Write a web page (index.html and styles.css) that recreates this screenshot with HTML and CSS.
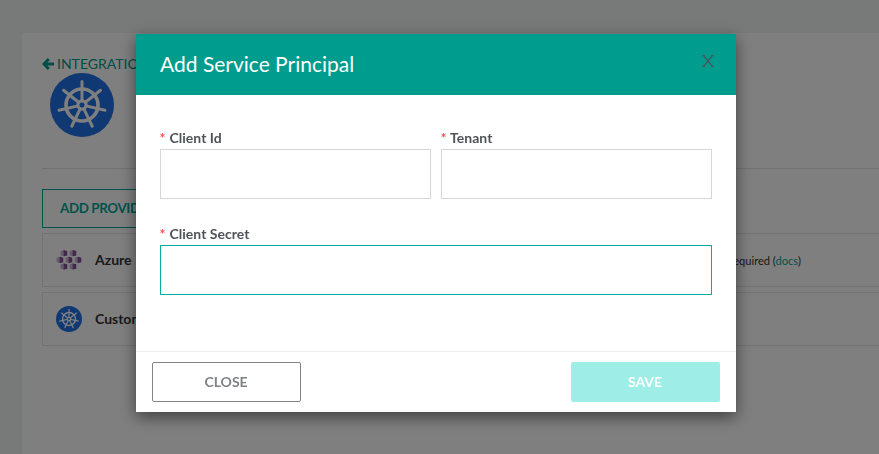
FILE: index.html
```html
<!DOCTYPE html>
<html lang="en">
<head>
<meta charset="utf-8">
<title>Add Service Principal</title>
<link rel="stylesheet" href="styles.css">
</head>
<body>
<svg class="defs" width="0" height="0">
  <defs>
    <symbol id="helm" viewBox="-32 -32 64 64">
      <circle r="32" class="helm-disc"/>
      <g class="helm-lines">
        <circle class="helm-ring" r="16"/>
        <path id="spoke" d="M0-4V-23.6"/>
        <use href="#spoke" transform="rotate(51.43)"/>
        <use href="#spoke" transform="rotate(102.86)"/>
        <use href="#spoke" transform="rotate(154.29)"/>
        <use href="#spoke" transform="rotate(205.71)"/>
        <use href="#spoke" transform="rotate(257.14)"/>
        <use href="#spoke" transform="rotate(308.57)"/>
        <circle r="4.2"/>
      </g>
    </symbol>
    <symbol id="cube" viewBox="0 0 8 8">
      <path class="cube-light" d="M0 1.3 4.8 0v8L0 6.8z"/>
      <path class="cube-dark" d="M3.6 0 8 1.3v5.4L3.6 8z"/>
    </symbol>
  </defs>
</svg>
<main class="page">
  <a class="back"><svg width="12" height="14" viewBox="0 0 12 14"><path d="M6.8 2 2 7l4.8 5M2 7h10" /></svg><span>INTEGRATIONS</span></a>
  <svg class="logo"><use href="#helm"/></svg>
  <hr>
  <button class="add">ADD PROVIDER</button>
  <section class="row">
    <svg class="azure" viewBox="0 0 26 20">
      <use href="#cube" x="4" y="0" width="8" height="6.6"/><use href="#cube" x="13" y="0" width="8" height="6.6"/>
      <use href="#cube" x="0" y="6.6" width="8" height="6.6"/><use href="#cube" x="9" y="6.6" width="8" height="6.6"/><use href="#cube" x="18" y="6.6" width="8" height="6.6"/>
      <use href="#cube" x="4" y="13.2" width="8" height="6.6"/><use href="#cube" x="13" y="13.2" width="8" height="6.6"/>
    </svg>
    <strong>Azure AKS</strong>
    <span class="note">Service principal required (<a>docs</a>)</span>
  </section>
  <section class="row">
    <svg class="small-helm"><use href="#helm"/></svg>
    <strong>Custom</strong>
  </section>
</main>
<div class="backdrop">
  <div class="dialog">
    <header><h1>Add Service Principal</h1><svg class="x" width="12" height="12" viewBox="0 0 12 12"><path d="M.3 .6H3M9 .6h2.7M.3 11.4H3M9 11.4h2.7M1.6.6l8.8 10.8M10.4.6l-8.8 10.8"/></svg></header>
    <form>
      <label><span><i>*</i> Client Id</span><input type="text"></label>
      <label><span><i>*</i> Tenant</span><input type="text"></label>
      <label class="wide"><span><i>*</i> Client Secret</span><input class="active" type="text"></label>
    </form>
    <footer><button class="close">CLOSE</button><button class="save">SAVE</button></footer>
  </div>
</div>
</body>
</html>
```
FILE: styles.css
```css
* { box-sizing: border-box; }
body { margin: 0; height: 454px; overflow: hidden; background: #f1f5f4; font: 14px/20px Lato, "Liberation Sans", sans-serif; color: #333; }
.defs { position: absolute; }
button { font: bold 14px/20px Lato, sans-serif; padding: 0; }
.page { margin: 33px 0 0 22px; padding: 21px 0 0 20px; width: 900px; height: 430px; background: #fff; }
.back { display: flex; align-items: center; height: 19px; gap: 3px; color: #009c8d; }
.back svg { fill: none; stroke: #009c8d; stroke-width: 3; }
.logo { display: block; width: 64px; height: 64px; margin-left: 8px; }
.helm-disc { fill: #2070e4; }
.helm-lines { fill: none; stroke: #fff; stroke-width: 3; stroke-linecap: round; }
.helm-ring { stroke-width: 3.6; }
.cube-light { fill: #c9b4d4; }
.cube-dark { fill: #844f9c; }
hr { margin: 31px 0 20px; border: 0; border-top: 1px solid #e2e2e2; }
.add { display: block; width: 134px; height: 39px; padding: 0 0 2px 17px; border: 1px solid #00a797; background: none; color: #00a797; text-align: left; font-size: 13.33px; letter-spacing: -.35px; }
.row { display: flex; align-items: center; height: 54px; margin-top: 5px; padding-left: 13px; border: 1px solid #e7e7e7; }
.row svg { width: 26px; height: 26px; margin-right: 13px; }
.row .azure { height: 20px; }
.row strong { width: 540px; color: #333; word-spacing: 1.5px; }
.row .note { padding-top: 2px; margin-left: 12px; font-size: 11.1px; }
.note a { color: #00a797; }
.backdrop { position: fixed; inset: 0; padding: 34px 0 0 136px; background: rgba(0,0,0,.5); }
.dialog { width: 600px; height: 378px; background: #fff; box-shadow: 0 5px 15px rgba(0,0,0,.5); }
header { display: flex; justify-content: space-between; height: 61px; padding: 20px 22px 0 24px; background: #009c8d; }
h1 { margin: 0; font: 21px/20px Lato, sans-serif; color: #fff; }
.x { margin-top: 1px; fill: none; stroke: #4d5358; stroke-width: 1.3; }
form { display: grid; grid-template-columns: 271px 271px; gap: 26px 10px; height: 256px; padding: 34px 24px 0; align-content: start; }
label { font-weight: bold; color: #4d5358; letter-spacing: .03px; }
.wide { grid-column: span 2; }
label span { display: block; height: 20px; line-height: 18px; }
label i { margin: 0 .5px 0 -.5px; font-style: normal; color: #ff4b55; }
input { display: block; width: 100%; height: 50px; border: 1px solid #d5d7d7; outline: 0; background: #fff; }
.active { border-color: #00ac9b; }
footer { display: flex; justify-content: space-between; height: 61px; padding: 10px 16px; border-top: 1px solid #eee; }
footer button { width: 149px; height: 40px; border-radius: 2px; }
.close { padding-right: 1px; background: #fff; border: 1px solid #808285; color: #808285; }
.save { padding-right: 1px; background: #9eeee7; border: 0; color: #fff; }
```
